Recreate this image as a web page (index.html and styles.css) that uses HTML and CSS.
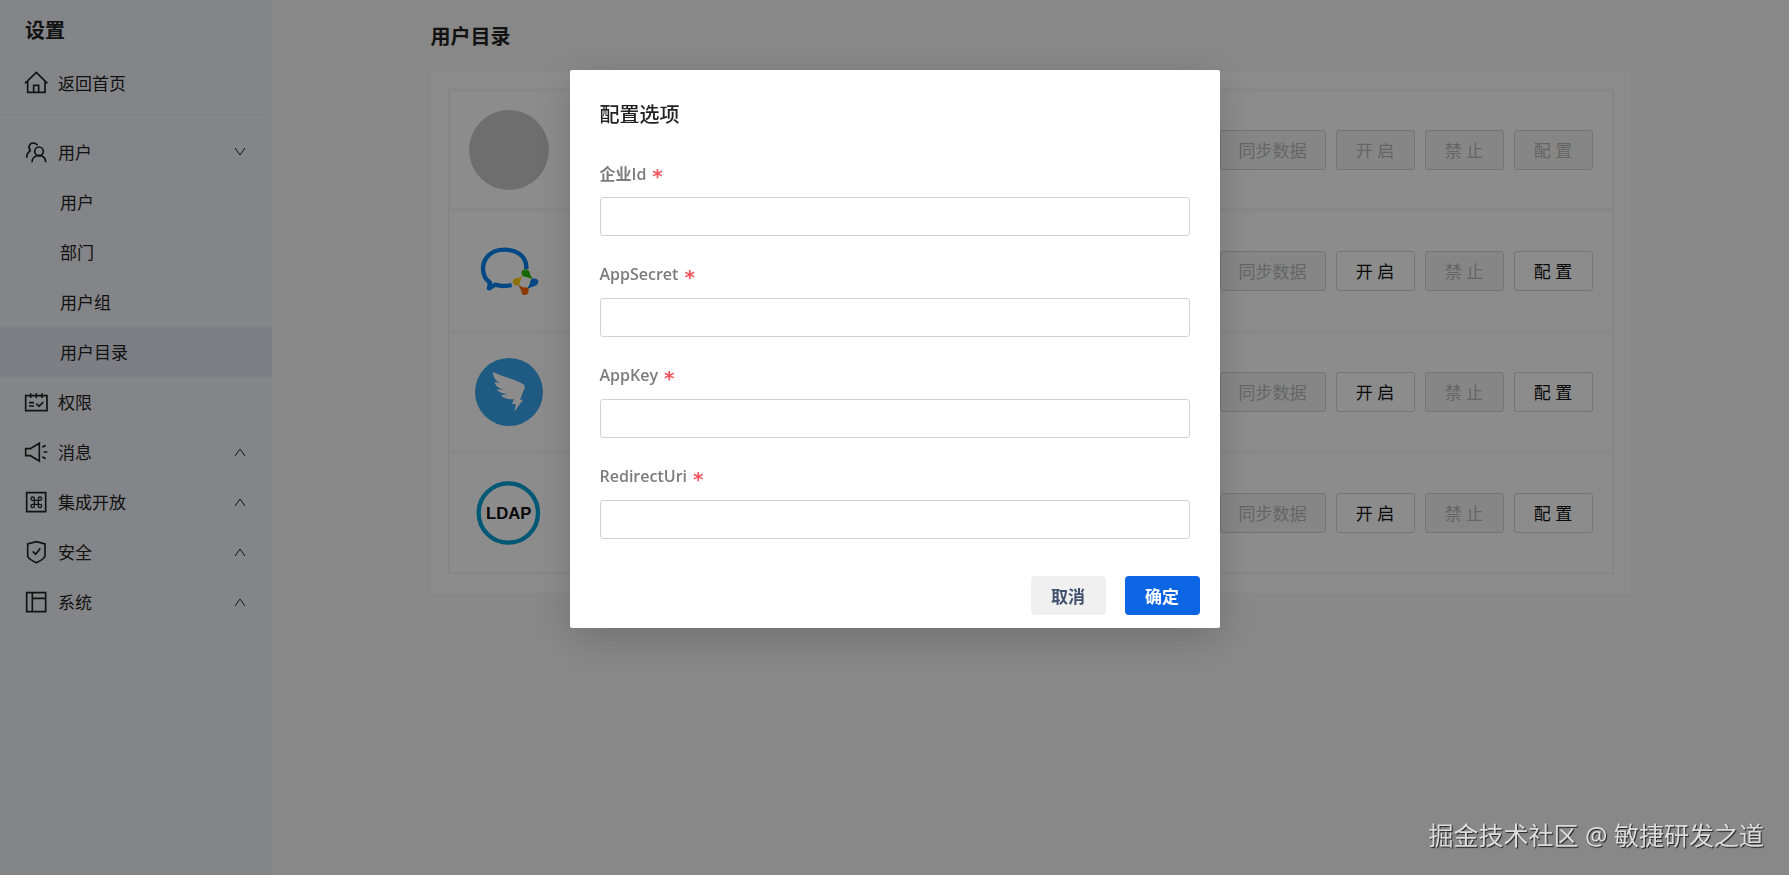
FILE: index.html
```html
<!DOCTYPE html>
<html lang="zh-CN">
<head>
    <meta charset="UTF-8">
    <meta name="viewport" content="width=device-width, initial-scale=1.0">
    <title>用户目录</title>
    <link rel="stylesheet" href="styles.css">
</head>
<body>
    <div class="layout">
        <aside class="sidebar">
            <h2 class="sidebar-title">设置</h2>
            <a class="menu-item" href="#">
                <svg class="icon" viewBox="72 213 72 72"><path d="M75 250L109 217L142 250M83 244V277H135V244M101 277V256H116V277"/></svg>
                <span>返回首页</span>
            </a>
            <hr class="divider">
            <nav class="menu">
                <button class="menu-item" type="button">
                    <svg class="icon" viewBox="72 420 72 72"><circle cx="117" cy="454" r="13"/><path d="M96 487C96 474 105 467 117 467S137 474 137 487M112 436C108 427 92 426 88 437C86 443 88 449 92 452M92 452C84 456 80 464 80 473"/></svg>
                    <span>用户</span>
                    <svg class="arrow" viewBox="0 0 16 16"><path d="M3 4L8 11L13 4"/></svg>
                </button>
                <a class="menu-item sub" href="#"><span>用户</span></a>
                <a class="menu-item sub" href="#"><span>部门</span></a>
                <a class="menu-item sub" href="#"><span>用户组</span></a>
                <a class="menu-item sub active" href="#"><span>用户目录</span></a>
                <a class="menu-item" href="#">
                    <svg class="icon" viewBox="72 30 72 72"><path d="M77 47H141V92H77ZM92 40V54M109 40V54M126 40V54M87 68H102M87 78H102M109 71L117 79L130 66"/></svg>
                    <span>权限</span>
                </a>
                <button class="menu-item" type="button">
                    <svg class="icon" viewBox="72 180 72 72"><path d="M77 206H91L118 190V243L91 227H77ZM127 202L137 196M131 216H142M127 230L137 236"/></svg>
                    <span>消息</span>
                    <svg class="arrow" viewBox="0 0 16 16"><path d="M3 12L8 5L13 12"/></svg>
                </button>
                <button class="menu-item" type="button">
                    <svg class="icon" viewBox="72 330 72 72"><path d="M80 338H137V395H80Z"/><path class="thin" d="M103 361H115V373H103ZM103 361H98A5 5 0 1 1 103 356ZM115 361V356A5 5 0 1 1 120 361ZM115 373H120A5 5 0 1 1 115 378ZM103 373V378A5 5 0 1 1 98 373Z"/></svg>
                    <span>集成开放</span>
                    <svg class="arrow" viewBox="0 0 16 16"><path d="M3 12L8 5L13 12"/></svg>
                </button>
                <button class="menu-item" type="button">
                    <svg class="icon" viewBox="72 480 72 72"><path d="M109 485L135 492V529C131 537 120 543 109 548C98 543 87 537 83 529V492ZM98 514L107 523L121 505"/></svg>
                    <span>安全</span>
                    <svg class="arrow" viewBox="0 0 16 16"><path d="M3 12L8 5L13 12"/></svg>
                </button>
                <button class="menu-item" type="button">
                    <svg class="icon" viewBox="72 630 72 72"><path d="M80 638H137V695H80ZM97 638V695M97 655H137"/></svg>
                    <span>系统</span>
                    <svg class="arrow" viewBox="0 0 16 16"><path d="M3 12L8 5L13 12"/></svg>
                </button>
            </nav>
        </aside>

        <main class="content">
            <div class="page">
                <h1 class="page-title">用户目录</h1>
                <div class="card">
                    <ul class="directory">
                        <li class="row">
                            <div class="row-inner">
                                <span class="logo avatar"></span>
                                <div class="actions">
                                    <button class="btn" disabled>同步数据</button>
                                    <button class="btn" disabled>开 启</button>
                                    <button class="btn" disabled>禁 止</button>
                                    <button class="btn" disabled>配 置</button>
                                </div>
                            </div>
                        </li>
                        <li class="row">
                            <div class="row-inner">
                                <svg class="logo" viewBox="90 93 240 240">
                                    <path d="M262 207C264 171 236 149 196 149C157 149 132 174 132 206C132 224 140 238 153 248L150 265L169 254C184 259 202 259 218 255" fill="none" stroke="#0082ef" stroke-width="13" stroke-linejoin="round"/>
                                    <path d="M248 223C246 213 252 208 260 208C268 208 274 216 273 223L282 238L264 232C257 232 250 230 248 223Z" fill="#2dbc00"/>
                                    <path d="M275 240C281 233 293 234 297 241C300 249 294 257 286 258L265 266L273 250Z" fill="#0082ef"/>
                                    <path d="M269 267C270 276 267 285 258 285C249 285 246 277 247 272L238 255L256 263C261 261 266 262 269 267Z" fill="#fb6500"/>
                                    <path d="M241 254C234 259 223 255 221 246C221 237 229 233 236 235L250 228L243 244Z" fill="#ffcc00"/>
                                </svg>
                                <div class="actions">
                                    <button class="btn" disabled>同步数据</button>
                                    <button class="btn">开 启</button>
                                    <button class="btn" disabled>禁 止</button>
                                    <button class="btn">配 置</button>
                                </div>
                            </div>
                        </li>
                        <li class="row">
                            <div class="row-inner">
                                <svg class="logo" viewBox="90 66 240 240">
                                    <circle cx="210" cy="186" r="102" fill="#38a4ec"/>
                                    <path d="M162 126C190 140 230 148 253 163C258 166 258 171 256 176L243 209H252L226 245L231 222H219L225 207C208 209 193 206 186 196L205 192C190 191 178 187 174 178L194 179C179 175 168 167 167 156L184 160C168 151 162 140 162 126Z" fill="#fff"/>
                                </svg>
                                <div class="actions">
                                    <button class="btn" disabled>同步数据</button>
                                    <button class="btn">开 启</button>
                                    <button class="btn" disabled>禁 止</button>
                                    <button class="btn">配 置</button>
                                </div>
                            </div>
                        </li>
                        <li class="row">
                            <div class="row-inner">
                                <svg class="logo" viewBox="90 69 240 240">
                                    <circle cx="208" cy="189" r="89" fill="none" stroke="#00a1d6" stroke-width="13"/>
                                    <text class="logo-text" x="209" y="206">LDAP</text>
                                </svg>
                                <div class="actions">
                                    <button class="btn" disabled>同步数据</button>
                                    <button class="btn">开 启</button>
                                    <button class="btn" disabled>禁 止</button>
                                    <button class="btn">配 置</button>
                                </div>
                            </div>
                        </li>
                    </ul>
                </div>
            </div>
        </main>
    </div>

    <div class="mask">
        <form class="modal" role="dialog" aria-labelledby="modal-title">
            <h3 class="modal-title" id="modal-title">配置选项</h3>
            <div class="field">
                <label for="corp-id">企业Id <span class="required">*</span></label>
                <input type="text" id="corp-id">
            </div>
            <div class="field">
                <label for="app-secret">AppSecret <span class="required">*</span></label>
                <input type="text" id="app-secret">
            </div>
            <div class="field">
                <label for="app-key">AppKey <span class="required">*</span></label>
                <input type="text" id="app-key">
            </div>
            <div class="field">
                <label for="redirect-uri">RedirectUri <span class="required">*</span></label>
                <input type="text" id="redirect-uri">
            </div>
            <div class="modal-footer">
                <button class="modal-btn" type="button">取消</button>
                <button class="modal-btn primary" type="button">确定</button>
            </div>
        </form>
    </div>

    <div class="watermark">掘金技术社区 @ 敏捷研发之道</div>
</body>
</html>
```
FILE: styles.css
```css
* {
    box-sizing: border-box;
}
body {
    margin: 0;
    font-family: "Noto Sans", "Noto Sans CJK SC", sans-serif;
    font-size: 17px;
    color: #222;
    background-color: #f7f7f7;
}
button, input {
    font-family: inherit;
    font-size: inherit;
}
.layout {
    display: flex;
    min-height: 100vh;
}

/* sidebar */
.sidebar {
    flex: none;
    width: 272px;
    background-color: #f1f3f8;
}
.sidebar-title {
    margin: 0;
    padding: 16px 25px 12px;
    font-size: 20px;
    line-height: 30px;
}
.divider {
    margin: 6px 4px 12px 0;
    border: none;
    border-top: 1px solid #e4e6ec;
}
.menu-item {
    display: flex;
    align-items: center;
    gap: 10px;
    width: 100%;
    height: 50px;
    padding: 0 24px;
    border: none;
    background: none;
    color: #222;
    text-decoration: none;
    cursor: pointer;
}
.menu-item span {
    padding-bottom: 2px;
}
.menu-item.sub {
    padding-left: 60px;
}
.menu-item.active {
    background-color: #e6e8f2;
}
.icon {
    width: 24px;
    height: 24px;
    fill: none;
    stroke: #222;
    stroke-width: 5;
}
.icon .thin {
    stroke-width: 4;
}
.arrow {
    width: 16px;
    height: 16px;
    margin-left: auto;
    fill: none;
    stroke: #222;
}

/* directory list */
.content {
    flex: 1;
}
.page {
    max-width: 1200px;
    margin: 0 auto;
    padding-top: 22px;
}
.page-title {
    margin: 0 0 20px;
    font-size: 20px;
    line-height: 30px;
}
.card {
    padding: 17px 17px 19px;
    background-color: #fff;
}
.directory {
    margin: 0;
    padding: 0;
    list-style: none;
    border: 1px solid #ededed;
}
.row {
    padding: 1px;
    border-bottom: 1px solid #ededed;
}
.row:last-child {
    border-bottom: none;
}
.row-inner {
    display: flex;
    align-items: center;
    justify-content: space-between;
    height: 118px;
    padding: 0 18px;
    border: 1px solid #fbfbfb;
}
.row:first-child .row-inner {
    border-color: #f5f5f5;
}
.logo {
    width: 80px;
    height: 80px;
}
.avatar {
    border-radius: 50%;
    background-color: #c8c8c8;
}
.logo-text {
    font-family: "Liberation Sans", Arial, sans-serif;
    font-size: 50px;
    font-weight: bold;
    text-anchor: middle;
    fill: #111;
}
.actions {
    display: flex;
    gap: 10px;
}
.btn {
    min-width: 79px;
    height: 40px;
    padding: 0 18px 2px;
    border: 1px solid #d4d4d4;
    border-radius: 3px;
    background-color: #fff;
    color: #111;
    cursor: pointer;
}
.btn:disabled {
    background-color: #f5f5f5;
    color: #b8b8b8;
    cursor: not-allowed;
}

/* dialog */
.mask {
    position: fixed;
    inset: 0;
    display: flex;
    align-items: flex-start;
    justify-content: center;
    padding-top: 70px;
    background-color: rgba(0, 0, 0, 0.45);
}
.modal {
    width: 650px;
    padding: 31px 30px 13px;
    border-radius: 2px;
    background-color: #fff;
    box-shadow: 0 10px 40px rgba(0, 0, 0, 0.18);
}
.modal-title {
    margin: 0 0 32px;
    font-size: 20px;
    font-weight: 500;
    line-height: 28px;
}
.field {
    margin-bottom: 26px;
}
.field label {
    display: flex;
    align-items: center;
    gap: 6px;
    height: 24px;
    margin-bottom: 12px;
    font-family: "Open Sans", "Noto Sans CJK SC", sans-serif;
    font-size: 16px;
    font-weight: 600;
    color: #7c7c7c;
}
.field input {
    display: block;
    width: 100%;
    height: 39px;
    padding: 0 12px;
    border: 1px solid #d2d2d2;
    border-radius: 3px;
}
.required {
    padding-top: 5px;
    font-family: "DejaVu Sans", sans-serif;
    font-size: 20px;
    font-weight: bold;
    color: #f5555d;
}
.modal-footer {
    display: flex;
    justify-content: flex-end;
    gap: 19px;
    margin: 37px -10px 0 0;
}
.modal-btn {
    width: 75px;
    height: 39px;
    border: none;
    border-radius: 4px;
    background-color: #f0f0f0;
    color: #42526e;
    font-weight: bold;
    cursor: pointer;
}
.modal-btn.primary {
    background-color: #0c66e4;
    color: #fff;
}

.watermark {
    position: fixed;
    right: 25px;
    bottom: 20px;
    font-size: 25px;
    line-height: 40px;
    color: #dcdcdc;
    text-shadow: 1px 1px 1px #222;
}
```
